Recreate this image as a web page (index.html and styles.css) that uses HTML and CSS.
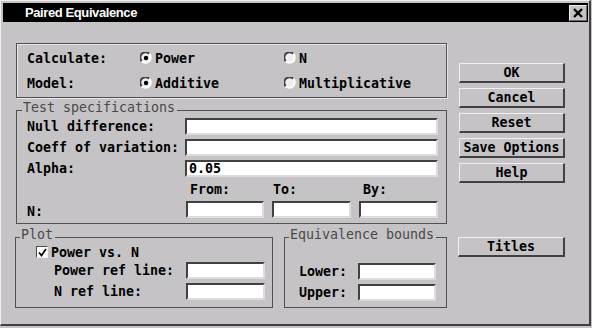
FILE: index.html
```html
<!DOCTYPE html>
<html>
<head>
<meta charset="utf-8">
<link rel="stylesheet" href="styles.css">
</head>
<body>
<div class="win">
  <div class="titlebar">
    <span class="title">Paired Equivalence</span>
    <span class="close"><svg width="10" height="10" viewBox="0 0 10 10"><path d="M1 1 L9 9 M9 1 L1 9" stroke="#000" stroke-width="2.4" fill="none"/></svg></span>
  </div>
  <div class="content">
    <div class="left">
      <div class="box calc">
        <div class="rrow">
          <span class="lbl">Calculate:</span>
          <span class="opt"><svg class="radio" width="12" height="12" viewBox="0 0 12 12"><circle cx="6" cy="6" r="5" fill="#efefef"/><path d="M1.8 9.2 A5 5 0 0 1 9.2 1.8" stroke="#424142" stroke-width="2" fill="none"/><path d="M9.2 1.8 A5 5 0 0 1 1.8 9.2" stroke="#ffffff" stroke-width="2" fill="none"/><circle cx="6" cy="6" r="2.2" fill="#000"/></svg>Power</span>
          <span class="opt"><svg class="radio" width="12" height="12" viewBox="0 0 12 12"><circle cx="6" cy="6" r="5" fill="#efefef"/><path d="M1.8 9.2 A5 5 0 0 1 9.2 1.8" stroke="#424142" stroke-width="2" fill="none"/><path d="M9.2 1.8 A5 5 0 0 1 1.8 9.2" stroke="#ffffff" stroke-width="2" fill="none"/></svg>N</span>
        </div>
        <div class="rrow">
          <span class="lbl">Model:</span>
          <span class="opt"><svg class="radio" width="12" height="12" viewBox="0 0 12 12"><circle cx="6" cy="6" r="5" fill="#efefef"/><path d="M1.8 9.2 A5 5 0 0 1 9.2 1.8" stroke="#424142" stroke-width="2" fill="none"/><path d="M9.2 1.8 A5 5 0 0 1 1.8 9.2" stroke="#ffffff" stroke-width="2" fill="none"/><circle cx="6" cy="6" r="2.2" fill="#000"/></svg>Additive</span>
          <span class="opt"><svg class="radio" width="12" height="12" viewBox="0 0 12 12"><circle cx="6" cy="6" r="5" fill="#efefef"/><path d="M1.8 9.2 A5 5 0 0 1 9.2 1.8" stroke="#424142" stroke-width="2" fill="none"/><path d="M9.2 1.8 A5 5 0 0 1 1.8 9.2" stroke="#ffffff" stroke-width="2" fill="none"/></svg>Multiplicative</span>
        </div>
      </div>

      <div class="ghead ghead-spec"><span class="gl gl-spec"></span><span class="gt">Test specifications</span><span class="gr"></span></div>
      <div class="gbox spec">
        <div class="frow"><span class="flbl">Null difference:</span><span class="field wide"></span></div>
        <div class="frow"><span class="flbl">Coeff of variation:</span><span class="field wide"></span></div>
        <div class="frow"><span class="flbl">Alpha:</span><span class="field wide"><span class="val">0.05</span></span></div>
        <div class="frow hrow"><span class="flbl nlbl"></span><span class="trip"><span class="hl">From:</span><span class="hl hl-to">To:</span><span class="hl">By:</span></span></div>
        <div class="frow nrow"><span class="flbl nlbl">N:</span><span class="trip"><span class="field"></span><span class="field"></span><span class="field"></span></span></div>
      </div>

      <div class="bottom">
        <div class="plotwrap">
          <div class="ghead"><span class="gl"></span><span class="gt">Plot</span><span class="gr"></span></div>
          <div class="gbox plot">
            <div class="crow"><span class="check"><svg width="9" height="9" viewBox="0 0 9 9"><path d="M1 4.5 L3.5 7.5 L8 1" stroke="#000" stroke-width="1.7" fill="none"/></svg></span>Power vs. N</div>
            <div class="prow"><span class="plbl">Power ref line:</span><span class="field pf"></span></div>
            <div class="prow"><span class="plbl">N ref line:</span><span class="field pf"></span></div>
          </div>
        </div>
        <div class="eqwrap">
          <div class="ghead"><span class="gl"></span><span class="gt">Equivalence bounds</span><span class="gr"></span></div>
          <div class="gbox eq">
            <div class="erow"><span class="elbl">Lower:</span><span class="field ef"></span></div>
            <div class="erow"><span class="elbl">Upper:</span><span class="field ef"></span></div>
          </div>
        </div>
      </div>
    </div>

    <div class="right">
      <div class="btn">OK</div>
      <div class="btn">Cancel</div>
      <div class="btn">Reset</div>
      <div class="btn">Save Options</div>
      <div class="btn">Help</div>
      <div class="btn titles">Titles</div>
    </div>
  </div>
</div>
</body>
</html>
```

FILE: styles.css
```css
html, body {
  margin: 0;
  padding: 0;
  background: #c6c3c6;
}
body {
  width: 592px;
  height: 328px;
  overflow: hidden;
  font-family: "DejaVu Sans Mono", "Liberation Mono", monospace;
  font-size: 13.3px;
  font-weight: bold;
  color: #000;
}
.win {
  box-sizing: border-box;
  width: 591px;
  height: 326px;
  border-top: 1px solid #efefef;
  border-left: 1px solid #efefef;
  border-right: 2px solid #424142;
  border-bottom: 2px solid #424142;
  padding: 2px 0 0 2px;
  background: #c6c3c6;
}
.titlebar {
  height: 19px;
  width: 585px;
  background: #000;
  display: flex;
  align-items: center;
  justify-content: space-between;
}
.title {
  font-family: "Liberation Sans", Arial, sans-serif;
  font-size: 13px;
  font-weight: bold;
  letter-spacing: -0.4px;
  color: #fff;
  padding-left: 22px;
}
.close {
  box-sizing: border-box;
  width: 18px;
  height: 16px;
  margin-right: 1px;
  background: #c6c3c6;
  border-top: 1px solid #efefef;
  border-left: 1px solid #efefef;
  border-right: 1px solid #6b696b;
  border-bottom: 1px solid #6b696b;
  display: flex;
  align-items: center;
  justify-content: center;
}
.content {
  display: flex;
  padding: 21px 0 0 13px;
  gap: 12px;
}
.left {
  width: 431px;
  display: flex;
  flex-direction: column;
}
.box {
  box-sizing: border-box;
  border: 1px solid #525152;
  box-shadow: inset 1px 1px 0 #e7e7e7, 1px 1px 0 #e7e7e7;
}
.calc {
  height: 55px;
  display: flex;
  flex-direction: column;
  justify-content: center;
}
.rrow {
  height: 25px;
  display: flex;
  align-items: center;
  padding-left: 10px;
}
.lbl {
  width: 113px;
}
.opt {
  width: 144px;
  display: flex;
  align-items: center;
}
.radio {
  margin-right: 3px;
  flex: none;
}

/* group header with label sitting on the border line */
.ghead {
  height: 13px;
  display: flex;
  align-items: flex-end;
}
.gl {
  width: 5px;
  height: 100%;
  box-sizing: border-box;
  border-bottom: 1px solid #525152;
  flex: none;
}
.gl-spec {
  width: 6px;
}
.gt {
  font-weight: normal;
  color: #4a494a;
  line-height: 13px;
  padding: 0 2px 0 1px;
  margin-bottom: -3px;
}
.gr {
  flex: 1;
  height: 100%;
  box-sizing: border-box;
  border-bottom: 1px solid #525152;
}
.gbox {
  box-sizing: border-box;
  border: 1px solid #525152;
  border-top: none;
}

.spec {
  height: 113px;
  padding: 7px 8px 0 10px;
}
.frow {
  display: flex;
  align-items: center;
  height: 17px;
  margin-bottom: 4px;
}
.flbl {
  width: 158px;
  flex: none;
}
.nlbl {
  width: 159px;
}
.hrow {
  margin-bottom: 3px;
}
.nrow {
  margin-bottom: 0;
}
.nrow .nlbl {
  padding-top: 4px;
}
.field {
  box-sizing: border-box;
  height: 17px;
  background: #fff;
  border-top: 2px solid #424142;
  border-left: 2px solid #424142;
  border-bottom: 2px solid #dedbde;
  border-right: 2px solid #dedbde;
  display: flex;
  align-items: center;
}
.wide {
  width: 253px;
}
.val {
  padding-left: 2px;
}
.trip {
  display: grid;
  grid-template-columns: 78px 79px 79px;
  column-gap: 8px;
}
.hl {
  padding-left: 4px;
}
.hl-to {
  padding-left: 1px;
}

.bottom {
  display: flex;
  gap: 11px;
  margin-left: -1px;
  margin-top: 1px;
}
.plotwrap {
  width: 258px;
}
.eqwrap {
  width: 163px;
}
.plot {
  height: 70px;
  padding: 8px 0 0 20px;
}
.crow {
  display: flex;
  align-items: center;
  height: 12px;
  margin-bottom: 4px;
}
.check {
  box-sizing: border-box;
  width: 12px;
  height: 12px;
  background: #fff;
  border-top: 1px solid #4a494a;
  border-left: 1px solid #4a494a;
  border-bottom: 1px solid #efefef;
  border-right: 1px solid #efefef;
  margin-right: 3px;
  display: flex;
  align-items: center;
  justify-content: center;
}
.prow {
  display: flex;
  align-items: center;
  height: 17px;
  margin-bottom: 4px;
  padding-left: 18px;
}
.plbl {
  width: 132px;
  flex: none;
}
.pf {
  width: 79px;
}
.eq {
  height: 70px;
  padding: 25px 0 0 14px;
}
.erow {
  display: flex;
  align-items: center;
  height: 17px;
  margin-bottom: 4px;
}
.elbl {
  width: 59px;
  flex: none;
}
.ef {
  width: 78px;
}

.right {
  width: 106px;
  display: flex;
  flex-direction: column;
  gap: 5px;
  padding-top: 20px;
}
.btn {
  box-sizing: border-box;
  height: 20px;
  border-top: 1px solid #efefef;
  border-left: 1px solid #efefef;
  border-right: 2px solid #424142;
  border-bottom: 2px solid #424142;
  display: flex;
  align-items: center;
  justify-content: center;
}
.titles {
  margin-top: 49px;
  margin-left: -1px;
}
```
